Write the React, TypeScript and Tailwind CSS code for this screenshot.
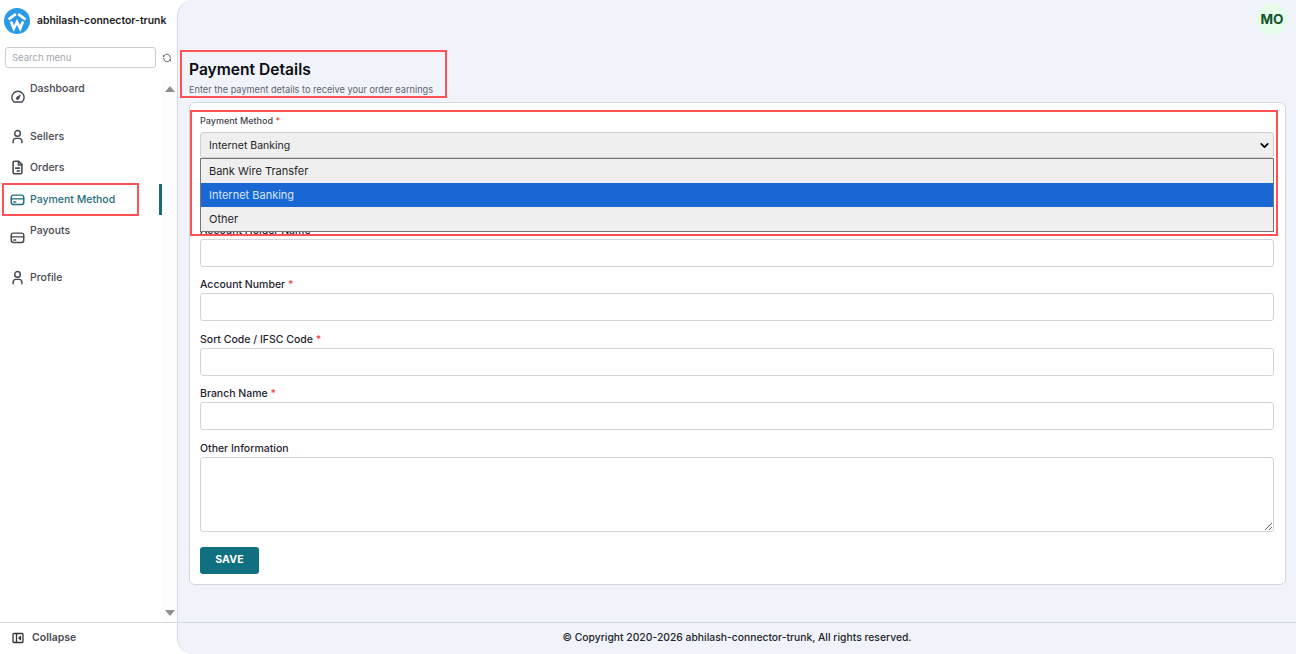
import { ChevronDown } from 'lucide-react';

function GaugeIcon() {
  return (
    <svg viewBox="0 0 24 24" className="w-[14px] h-[14px]" fill="none" stroke="currentColor" strokeWidth="2.4" strokeLinecap="round" strokeLinejoin="round">
      <path d="M5 20.500a10.500 10.500 0 1 1 14 0z" />
      <path d="M9.500 15.500a2.800 2.800 0 0 1 .8-3.800l6-3.200-2.600 6.500a2.700 2.700 0 0 1-4.200.5z" fill="currentColor" strokeWidth="1" />
    </svg>
  );
}

function UserIcon() {
  return (
    <svg viewBox="0 0 24 24" className="w-[15px] h-[15px]" fill="none" stroke="currentColor" strokeWidth="2.300" strokeLinecap="round" strokeLinejoin="round">
      <circle cx="12" cy="7" r="4.500" />
      <path d="M5 22v-2.500a4.500 4.500 0 0 1 4.500-4.500h5a4.500 4.500 0 0 1 4.500 4.500V22" />
    </svg>
  );
}

function FileIcon() {
  return (
    <svg viewBox="0 0 24 24" className="w-[15px] h-[15px]" fill="none" stroke="currentColor" strokeWidth="2.500" strokeLinecap="round" strokeLinejoin="round">
      <path d="M14 2H7a2 2 0 0 0-2 2v16a2 2 0 0 0 2 2h10a2 2 0 0 0 2-2V7z" />
      <path d="M13.500 2.500V8H19M9 13h6M11.500 17.500H15" />
    </svg>
  );
}

function CardIcon() {
  return (
    <svg viewBox="0 0 24 24" className="w-[15px] h-[15px]" fill="none" stroke="currentColor" strokeWidth="2.300" strokeLinecap="round" strokeLinejoin="round">
      <rect x="2" y="5" width="20" height="15" rx="3.500" />
      <path d="M2 11h20M6 16h3" />
    </svg>
  );
}

function Logo() {
  return (
    <svg viewBox="0 0 26 26" className="w-[26px] h-[26px] shrink-0">
      <circle cx="13" cy="13" r="13" fill="#2b9ae6" />
      <path d="M4.500 11.500 11.800 6M21.500 11.500 14.200 6" stroke="#fff" strokeWidth="2.800" fill="none" />
      <path d="M7 13.500 9.800 20.500 13 14 16.200 20.500 19 13.500" stroke="#fff" strokeWidth="2.600" fill="none" />
    </svg>
  );
}

function Field({ label, required }: { label: string; required?: boolean }) {
  return (
    <div className="flex flex-col">
      <label className="h-[18px] leading-[20px] text-[10.5px] font-medium text-[#1f2430]">
        {label}
        {required && <span className="text-[#e5484d]"> *</span>}
      </label>
      <input className="h-[28px] bg-white border border-[#d4d4d8] rounded-[3px]" />
    </div>
  );
}

export default function App() {
  return (
    <div className="relative flex h-[654px] w-[1296px] overflow-hidden bg-white font-['Inter',sans-serif]">
      <aside className="w-[177px] shrink-0 flex flex-col bg-white">
        <div className="flex items-center gap-[7px] h-[41px] pl-[4px]">
          <Logo />
          <span className="text-[10.4px] font-semibold text-[#1b1b1f] whitespace-nowrap">abhilash-connector-trunk</span>
        </div>
        <div className="flex items-center gap-[6px] pl-[5px] pt-[6px]">
          <input
            placeholder="Search menu"
            className="w-[151px] h-[21px] px-[6px] border border-[#c9ccd1] rounded-[3px] text-[9.5px] placeholder:text-[#a3a7ae] outline-none"
          />
          <svg viewBox="0 0 24 24" className="w-[10px] h-[10px] text-[#666]" fill="none" stroke="currentColor" strokeWidth="2.400" strokeLinecap="round" strokeLinejoin="round">
            <path d="M20 11A8 8 0 0 0 5 7l-1 3V5M4 13a8 8 0 0 0 15 4l1-3v5" />
          </svg>
        </div>
        <div className="flex flex-1 min-h-0 pt-[12px]">
          <nav className="w-[162px] flex flex-col text-[10.5px] font-medium text-[#45484f]">
            <a className="flex h-[41px] pl-[11px] gap-[5px] pt-[1px]">
              <span className="mt-[9px]"><GaugeIcon /></span>
              <span className="leading-[16px]">Dashboard</span>
            </a>
            <a className="flex items-center h-[31px] pl-[10px] gap-[5px]"><UserIcon /><span>Sellers</span></a>
            <a className="flex items-center h-[31px] mb-[1px] pl-[10px] gap-[5px]"><FileIcon /><span>Orders</span></a>
            <a className="flex items-center justify-between h-[31px] text-[#1f6f7c]">
              <span className="flex items-center pl-[10px] gap-[5px]"><CardIcon /><span>Payment Method</span></span>
              <span className="w-[3px] h-full bg-[#1e6a75]" />
            </a>
            <a className="flex h-[47px] pl-[10px] gap-[5px] pt-[8px]">
              <span className="mt-[7px]"><CardIcon /></span>
              <span className="leading-[16px]">Payouts</span>
            </a>
            <a className="flex items-center h-[31px] pl-[10px] gap-[5px]"><UserIcon /><span>Profile</span></a>
          </nav>
          <div className="flex-1 flex flex-col justify-between items-center bg-[#fdfdfd] pt-[6px] pb-[6px]">
            <span className="w-0 h-0 border-x-[5px] border-x-transparent border-b-[6px] border-b-[#8f8f8f]" />
            <span className="w-0 h-0 border-x-[5px] border-x-transparent border-t-[6px] border-t-[#8f8f8f]" />
          </div>
        </div>
        <div className="h-[32px] shrink-0 border-t border-[#d5d9e0] flex items-center pl-[12px] pb-[1px] gap-[8px] text-[10.5px] font-semibold text-[#4a4d55]">
          <svg viewBox="0 0 24 24" className="w-[12px] h-[12px] text-[#333]" fill="none" stroke="currentColor" strokeWidth="2.600" strokeLinejoin="round">
            <rect x="2" y="3" width="20" height="18" rx="2" />
            <path d="M9 3v18" />
            <path d="M17 9l-3 3 3 3z" fill="currentColor" />
          </svg>
          <span>Collapse</span>
        </div>
      </aside>

      <main className="flex-1 min-w-0 flex flex-col bg-[#f0f3f9] border-l border-[#d5d9e0] rounded-l-[16px]">
        <header className="h-[47px] shrink-0 flex justify-end items-start pt-[3px] pr-[8px]">
          <div className="w-[32px] h-[32px] rounded-full bg-[#e6fbe9] flex items-center justify-center text-[13.500px] font-bold text-[#14532d]">MO</div>
        </header>
        <div className="flex-1 min-h-0 pl-[11px] pr-[10px]">
          <h1 className="text-[15.600px] leading-[24px] font-semibold text-[#0b0c10] mt-[11px]">Payment Details</h1>
          <p className="text-[9.200px] leading-[12px] text-[#5f6570] mt-[2px]">Enter the payment details to receive your order earnings</p>
          <form className="relative mt-[6px] h-[483px] bg-white border border-[#d4d7dc] rounded-[6px] pl-[10px] pr-[11px] pt-[9px]">
            <div className="h-[18px] leading-[18px] text-[9px] font-medium text-[#3f444d]">
              Payment Method <span className="text-[#e5484d]">*</span>
            </div>
            <div className="relative mt-[2px] h-[26px] bg-[#efefef] border border-[#d0d0d0] rounded-[3px] pl-[8px] pt-[1px] flex items-center text-[10.500px] text-[#1f1f1f]">
              Internet Banking
              <ChevronDown size={13} strokeWidth={3.2} className="absolute right-[2px] top-[6px] text-black" />
              <ul className="absolute left-[-1px] right-[-1px] top-[25px] h-[74px] z-10 bg-[#efefef] border border-[#767676] text-[11px]">
                <li className="h-[24px] leading-[24px] pl-[8px] text-[#1f1f1f]">Bank Wire Transfer</li>
                <li className="h-[24px] leading-[24px] pl-[8px] bg-[#1967d2] text-[#d6e6ff]">Internet Banking</li>
                <li className="h-[24px] leading-[24px] pl-[8px] text-[#1f1f1f]">Other</li>
              </ul>
            </div>
            <div className="mt-[63px] flex flex-col gap-[8.400px]">
              <Field label="Account Holder Name" required />
              <Field label="Account Number" required />
              <Field label="Sort Code / IFSC Code" required />
              <Field label="Branch Name" required />
              <div className="flex flex-col">
                <label className="h-[18px] leading-[20px] text-[10.5px] font-medium text-[#1f2430]">Other Information</label>
                <textarea className="h-[75px] bg-white border border-[#d4d4d8] rounded-[3px]" />
              </div>
            </div>
            <button type="button" className="mt-[15px] w-[59px] h-[27px] bg-[#10707f] rounded-[3px] text-white text-[10.5px] font-bold tracking-[0.2px]">SAVE</button>
          </form>
        </div>
        <footer className="h-[32px] shrink-0 border-t border-[#d5d9e0] flex items-center justify-center pb-[1px] text-[10.350px] font-medium text-[#22252b]">
          © Copyright 2020-2026 abhilash-connector-trunk, All rights reserved.
        </footer>
      </main>

      <div className="absolute left-[2px] top-[183px] w-[137px] h-[33px] border-2 border-[#ff5257] pointer-events-none" />
      <div className="absolute left-[180px] top-[50px] w-[267px] h-[48px] border-2 border-[#ff5257] pointer-events-none" />
      <div className="absolute left-[190px] top-[110px] w-[1088px] h-[126px] border-2 border-[#ff5257] pointer-events-none z-20" />
    </div>
  );
}
